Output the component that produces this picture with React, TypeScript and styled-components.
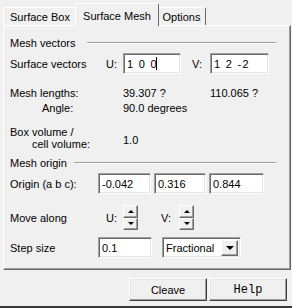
import React from "react";
import styled, { createGlobalStyle } from "styled-components";

const GlobalStyle = createGlobalStyle`
  html, body {
    margin: 0;
    padding: 0;
    background: #f0f0f0;
  }
  body {
    font-family: "Liberation Sans", Arial, sans-serif;
    font-size: 11px;
    color: #000;
  }
`;

const Window = styled.div`
  width: 292px;
  height: 308px;
  display: flex;
  flex-direction: column;
  background: #f0f0f0;
  overflow: hidden;
`;

const TabStrip = styled.div`
  display: flex;
  align-items: flex-end;
  height: 25px;
  padding-left: 3px;
  position: relative;
  z-index: 2;
`;

const Tab = styled.div<{ $active?: boolean; $w: number }>`
  width: ${(p) => p.$w}px;
  height: ${(p) => (p.$active ? 23 : 18)}px;
  margin: ${(p) => (p.$active ? "0 -2px -1px -2px" : "0")};
  padding-top: 1px;
  box-sizing: border-box;
  border-top: 1px solid #fff;
  border-left: 1px solid #fff;
  border-right: 1px solid #696969;
  border-radius: 2px 2px 0 0;
  background: #f0f0f0;
  display: flex;
  align-items: center;
  justify-content: center;
  white-space: nowrap;
  position: relative;
  z-index: ${(p) => (p.$active ? 2 : 1)};
`;

const Panel = styled.div`
  margin-left: 3px;
  width: 288px;
  height: 245px;
  box-sizing: border-box;
  border-top: 1px solid #fff;
  border-left: 1px solid #fff;
  border-right: 1px solid #696969;
  border-bottom: 1px solid #696969;
  box-shadow: inset -1px -1px #a0a0a0;
  display: flex;
  flex-direction: column;
  padding: 0 14px 0 6px;
`;

const Row = styled.div<{ $mt: number; $h: number }>`
  display: flex;
  align-items: center;
  margin-top: ${(p) => p.$mt}px;
  height: ${(p) => p.$h}px;
`;

const Label = styled.span<{ $w?: number; $indent?: number; $ml?: number }>`
  flex-shrink: 0;
  box-sizing: border-box;
  white-space: nowrap;
  ${(p) => (p.$w ? `width: ${p.$w}px;` : "")}
  padding-left: ${(p) => p.$indent || 0}px;
  margin-left: ${(p) => p.$ml || 0}px;
`;

const Separator = styled.div<{ $ml: number }>`
  flex: 1;
  margin-left: ${(p) => p.$ml}px;
  border-top: 1px solid #a0a0a0;
  border-bottom: 1px solid #fff;
`;

const Field = styled.div<{ $w: number; $h?: number; $ml?: number; $spaced?: boolean }>`
  width: ${(p) => p.$w}px;
  height: ${(p) => p.$h || 21}px;
  margin-left: ${(p) => p.$ml || 0}px;
  flex-shrink: 0;
  box-sizing: border-box;
  background: #fff;
  border: 1px solid;
  border-color: #a0a0a0 #fff #fff #a0a0a0;
  box-shadow: inset 1px 1px #696969, inset -1px -1px #e3e3e3;
  display: flex;
  align-items: center;
  padding-left: 3px;
  white-space: pre;
  letter-spacing: ${(p) => (p.$spaced ? "1.3px" : "0")};
`;

const Caret = styled.span`
  display: inline-block;
  width: 1px;
  height: 13px;
  margin-left: -2px;
  background: #000;
`;

const LabelStack = styled.div`
  width: 113px;
  flex-shrink: 0;
  display: flex;
  flex-direction: column;
  line-height: 12px;
`;

const StackLine = styled.span<{ $indent?: number }>`
  padding-left: ${(p) => p.$indent || 0}px;
  white-space: nowrap;
`;

const Value = styled.span<{ $w?: number; $pt?: number }>`
  ${(p) => (p.$w ? `width: ${p.$w}px;` : "")}
  flex-shrink: 0;
  white-space: nowrap;
  padding-top: ${(p) => p.$pt || 0}px;
`;

const Spinner = styled.div<{ $ml?: number }>`
  width: 15px;
  height: 25px;
  margin-left: ${(p) => p.$ml || 0}px;
  display: flex;
  flex-direction: column;
  flex-shrink: 0;
`;

const SpinButton = styled.div`
  flex: 1;
  box-sizing: border-box;
  border: 1px solid;
  border-color: #fff #696969 #696969 #fff;
  box-shadow: inset -1px -1px #a0a0a0;
  background: #f0f0f0;
  display: flex;
  align-items: center;
  justify-content: center;
`;

const Arrow = styled.span<{ $down?: boolean; $size?: number }>`
  width: 0;
  height: 0;
  border-left: ${(p) => p.$size || 3}px solid transparent;
  border-right: ${(p) => p.$size || 3}px solid transparent;
  ${(p) =>
    p.$down
      ? `border-top: ${p.$size || 3}px solid #000;`
      : `border-bottom: ${p.$size || 3}px solid #000;`}
`;

const Select = styled(Field)`
  padding-right: 2px;
  justify-content: space-between;
`;

const DropButton = styled.div`
  width: 17px;
  height: 16px;
  box-sizing: border-box;
  border: 1px solid;
  border-color: #fff #696969 #696969 #fff;
  box-shadow: inset -1px -1px #a0a0a0;
  background: #f0f0f0;
  display: flex;
  align-items: center;
  justify-content: center;
`;

const ButtonRow = styled.div`
  display: flex;
  justify-content: flex-end;
  gap: 2px;
  margin-top: 8px;
  padding-right: 5px;
`;

const Button = styled.button<{ $mono?: boolean }>`
  width: 78px;
  height: 23px;
  box-sizing: border-box;
  border: 1px solid;
  border-color: #fff #404040 #404040 #fff;
  box-shadow: inset -1px -1px #a0a0a0, inset 1px 1px #e3e3e3;
  background: #f0f0f0;
  padding: 0;
  font-family: ${(p) =>
    p.$mono
      ? '"Liberation Mono", "Courier New", monospace'
      : '"Liberation Sans", Arial, sans-serif'};
  font-size: ${(p) => (p.$mono ? 12 : 11)}px;
  color: #000;
`;

const BottomEdge = styled.div`
  margin-top: auto;
  height: 2px;
  background: #3a3a3a;
`;

function SpinPair() {
  return (
    <Spinner>
      <SpinButton>
        <Arrow />
      </SpinButton>
      <SpinButton>
        <Arrow $down />
      </SpinButton>
    </Spinner>
  );
}

export default function App() {
  return (
    <>
      <GlobalStyle />
      <Window>
        <TabStrip>
          <Tab $w={74}>Surface Box</Tab>
          <Tab $w={84} $active>
            Surface Mesh
          </Tab>
          <Tab $w={49}>Options</Tab>
        </TabStrip>
        <Panel>
          <Row $mt={10} $h={14}>
            <Label>Mesh vectors</Label>
            <Separator $ml={12} />
          </Row>
          <Row $mt={3} $h={21}>
            <Label $w={96}>Surface vectors</Label>
            <Label $w={17}>U:</Label>
            <Field $w={58} $spaced>
              1 0 0<Caret />
            </Field>
            <Label $w={18} $ml={11}>
              V:
            </Label>
            <Field $w={59} $spaced>
              1 2 -2
            </Field>
          </Row>
          <Row $mt={12} $h={14}>
            <Label $w={113}>Mesh lengths:</Label>
            <Value $w={87}>39.307 ?</Value>
            <Value>110.065 ?</Value>
          </Row>
          <Row $mt={1} $h={14}>
            <Label $w={113} $indent={32}>
              Angle:
            </Label>
            <Value>90.0 degrees</Value>
          </Row>
          <Row $mt={10} $h={26}>
            <LabelStack>
              <StackLine>Box volume /</StackLine>
              <StackLine $indent={22}>cell volume:</StackLine>
            </LabelStack>
            <Value $pt={4}>1.0</Value>
          </Row>
          <Row $mt={5} $h={14}>
            <Label>Mesh origin</Label>
            <Separator $ml={7} />
          </Row>
          <Row $mt={3} $h={21}>
            <Label $w={88}>Origin (a b c):</Label>
            <Field $w={53}>-0.042</Field>
            <Field $w={52} $ml={3}>
              0.316
            </Field>
            <Field $w={55} $ml={3}>
              0.844
            </Field>
          </Row>
          <Row $mt={11} $h={25}>
            <Label $w={96}>Move along</Label>
            <Label $w={17}>U:</Label>
            <SpinPair />
            <Label $w={18} $ml={23}>
              V:
            </Label>
            <SpinPair />
          </Row>
          <Row $mt={7} $h={21}>
            <Label $w={88}>Step size</Label>
            <Field $w={54}>0.1</Field>
            <Select $w={79} $ml={10}>
              <span>Fractional</span>
              <DropButton>
                <Arrow $down $size={4} />
              </DropButton>
            </Select>
          </Row>
        </Panel>
        <ButtonRow>
          <Button>Cleave</Button>
          <Button $mono>Help</Button>
        </ButtonRow>
        <BottomEdge />
      </Window>
    </>
  );
}
